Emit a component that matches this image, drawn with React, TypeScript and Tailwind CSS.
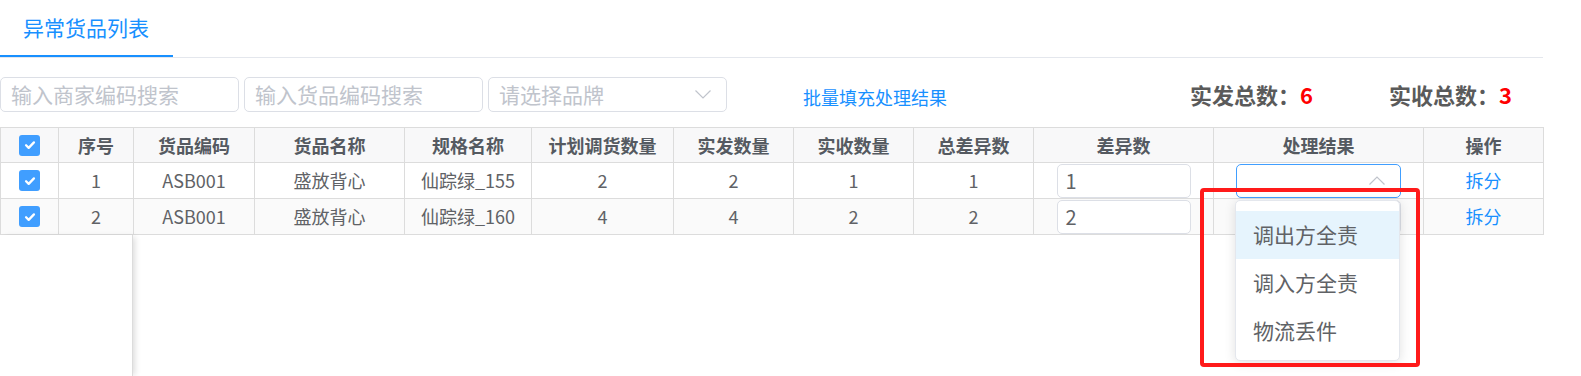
type Row = {
  no: number;
  code: string;
  name: string;
  spec: string;
  plan: number;
  sent: number;
  recv: number;
  diffTotal: number;
  diff: string;
};

const rows: Row[] = [
  { no: 1, code: "ASB001", name: "盛放背心", spec: "仙踪绿_155", plan: 2, sent: 2, recv: 1, diffTotal: 1, diff: "1" },
  { no: 2, code: "ASB001", name: "盛放背心", spec: "仙踪绿_160", plan: 4, sent: 4, recv: 2, diffTotal: 2, diff: "2" },
];

const headers = ["货品编码", "货品名称", "规格名称", "计划调货数量", "实发数量", "实收数量", "总差异数", "差异数", "处理结果", "操作"];

function Check() {
  return (
    <span className="inline-flex h-[21px] w-[21px] items-center justify-center rounded-[3px] bg-[#409eff]">
      <svg viewBox="0 0 16 16" className="h-[14px] w-[14px]" fill="none" stroke="white" strokeWidth="2.6" strokeLinecap="round" strokeLinejoin="round">
        <path d="M3.5 8.3l3 3 6-6.3" />
      </svg>
    </span>
  );
}

// thin wide arrow used by the select boxes
function Arrow({ up }: { up?: boolean }) {
  return (
    <svg viewBox="0 0 16 9" className="h-[9px] w-[16px]" fill="none" stroke="#c0c4cc" strokeWidth="1.2">
      <path d={up ? "M0.5 8.5L8 1l7.5 7.5" : "M0.5 0.5L8 8l7.5-7.5"} />
    </svg>
  );
}

const cell = "border border-[#dcdcdc] p-0 text-center align-middle";

export default function App() {
  return (
    <div className="relative h-[376px] w-[1581px] overflow-hidden bg-white font-['Noto_Sans_CJK_SC','Microsoft_YaHei',sans-serif] text-[#606266]">
      <div className="w-[1543px]">
        {/* tabs */}
        <div className="flex h-[58px] border-b border-[#e4e7ed]">
          <div className="flex h-[57px] w-[173px] items-center border-b-2 border-[#1890ff] pl-[23px] text-[21px] text-[#1890ff]">
            异常货品列表
          </div>
        </div>

        {/* toolbar */}
        <div className="mt-[19px] flex h-[35px] items-center pr-[31px]">
          <div className="flex h-[35px] w-[239px] items-center rounded-[5px] border border-[#dcdfe6] px-[10px] text-[21px] text-[#c0c4cc]">
            输入商家编码搜索
          </div>
          <div className="ml-[5px] flex h-[35px] w-[239px] items-center rounded-[5px] border border-[#dcdfe6] px-[10px] text-[21px] text-[#c0c4cc]">
            输入货品编码搜索
          </div>
          <div className="ml-[5px] flex h-[35px] w-[239px] items-center justify-between rounded-[5px] border border-[#dcdfe6] pl-[10px] pr-[15px] text-[21px] text-[#c0c4cc]">
            <span>请选择品牌</span>
            <Arrow />
          </div>
          <a className="ml-[76px] mt-[6px] text-[18px] text-[#1890ff]">批量填充处理结果</a>
          <div className="ml-auto flex items-center text-[22px] font-bold text-[#5a5a5a]">
            <span>实发总数：</span>
            <span className="text-[#ff0000]">6</span>
            <span className="ml-[76px]">实收总数：</span>
            <span className="text-[#ff0000]">3</span>
          </div>
        </div>

        {/* table */}
        <table className="mt-[15px] w-[1543px] table-fixed border-collapse text-[18px]">
          <colgroup>
            <col className="w-[58px]" />
            <col className="w-[75px]" />
            <col className="w-[121px]" />
            <col className="w-[150px]" />
            <col className="w-[127px]" />
            <col className="w-[142px]" />
            <col className="w-[120px]" />
            <col className="w-[120px]" />
            <col className="w-[120px]" />
            <col className="w-[180px]" />
            <col className="w-[210px]" />
            <col className="w-[120px]" />
          </colgroup>
          <thead>
            <tr className="h-[35px] bg-[#f8f8f9] font-bold text-[#555a61]">
              <th className={cell}>
                <div className="flex justify-center">
                  <Check />
                </div>
              </th>
              <th className={`${cell} relative z-[1] shadow-[4px_0_6px_-2px_rgba(0,0,0,0.14)]`}>序号</th>
              {headers.map((h) => (
                <th key={h} className={cell}>
                  {h}
                </th>
              ))}
            </tr>
          </thead>
          <tbody>
            {rows.map((r, i) => (
              <tr key={r.no} className={`h-[36px] ${i % 2 === 1 ? "bg-[#fafafa]" : "bg-white"}`}>
                <td className={cell}>
                  <div className="flex justify-center">
                    <Check />
                  </div>
                </td>
                <td className={`${cell} relative z-[1] shadow-[4px_0_6px_-2px_rgba(0,0,0,0.14)]`}>{r.no}</td>
                <td className={cell}>{r.code}</td>
                <td className={cell}>{r.name}</td>
                <td className={cell}>{r.spec}</td>
                <td className={cell}>{r.plan}</td>
                <td className={cell}>{r.sent}</td>
                <td className={cell}>{r.recv}</td>
                <td className={cell}>{r.diffTotal}</td>
                <td className={cell}>
                  <div className="flex justify-center">
                    <div className="flex h-[34px] w-[134px] items-center rounded-[5px] border border-[#dcdfe6] bg-white pl-[8px] text-left text-[20px]">
                      {r.diff}
                    </div>
                  </div>
                </td>
                <td className={cell}>
                  <div className="flex justify-center">
                    <div
                      className={`flex h-[34px] w-[165px] items-center justify-end rounded-[5px] border bg-white pr-[15px] ${
                        i === 0 ? "border-[#409eff]" : "border-[#dcdfe6]"
                      }`}
                    >
                      <Arrow up />
                    </div>
                  </div>
                </td>
                <td className={`${cell} text-[#1890ff]`}>拆分</td>
              </tr>
            ))}
          </tbody>
        </table>

        {/* fixed column body continues */}
        <div className="flex h-[142px]">
          <div className="w-[133px] border-r border-[#dcdcdc] shadow-[4px_0_6px_-2px_rgba(0,0,0,0.14)]" />
        </div>
      </div>

      {/* dropdown popup */}
      <div className="absolute left-[1235px] top-[200px] w-[165px] rounded-[5px] border border-[#e4e7ed] bg-white pb-[5px] pt-[10px] shadow-[0_2px_12px_rgba(0,0,0,0.12)]">
        <div className="flex h-[48px] items-center bg-[#e6f4fd] pl-[17px] text-[21px]">调出方全责</div>
        <div className="flex h-[48px] items-center pl-[17px] text-[21px]">调入方全责</div>
        <div className="flex h-[48px] items-center pl-[17px] text-[21px]">物流丢件</div>
      </div>

      {/* red highlight frame */}
      <div className="absolute left-[1200px] top-[188px] h-[179px] w-[220px] rounded-[4px] border-4 border-[#ff1a1a]" />
    </div>
  );
}
